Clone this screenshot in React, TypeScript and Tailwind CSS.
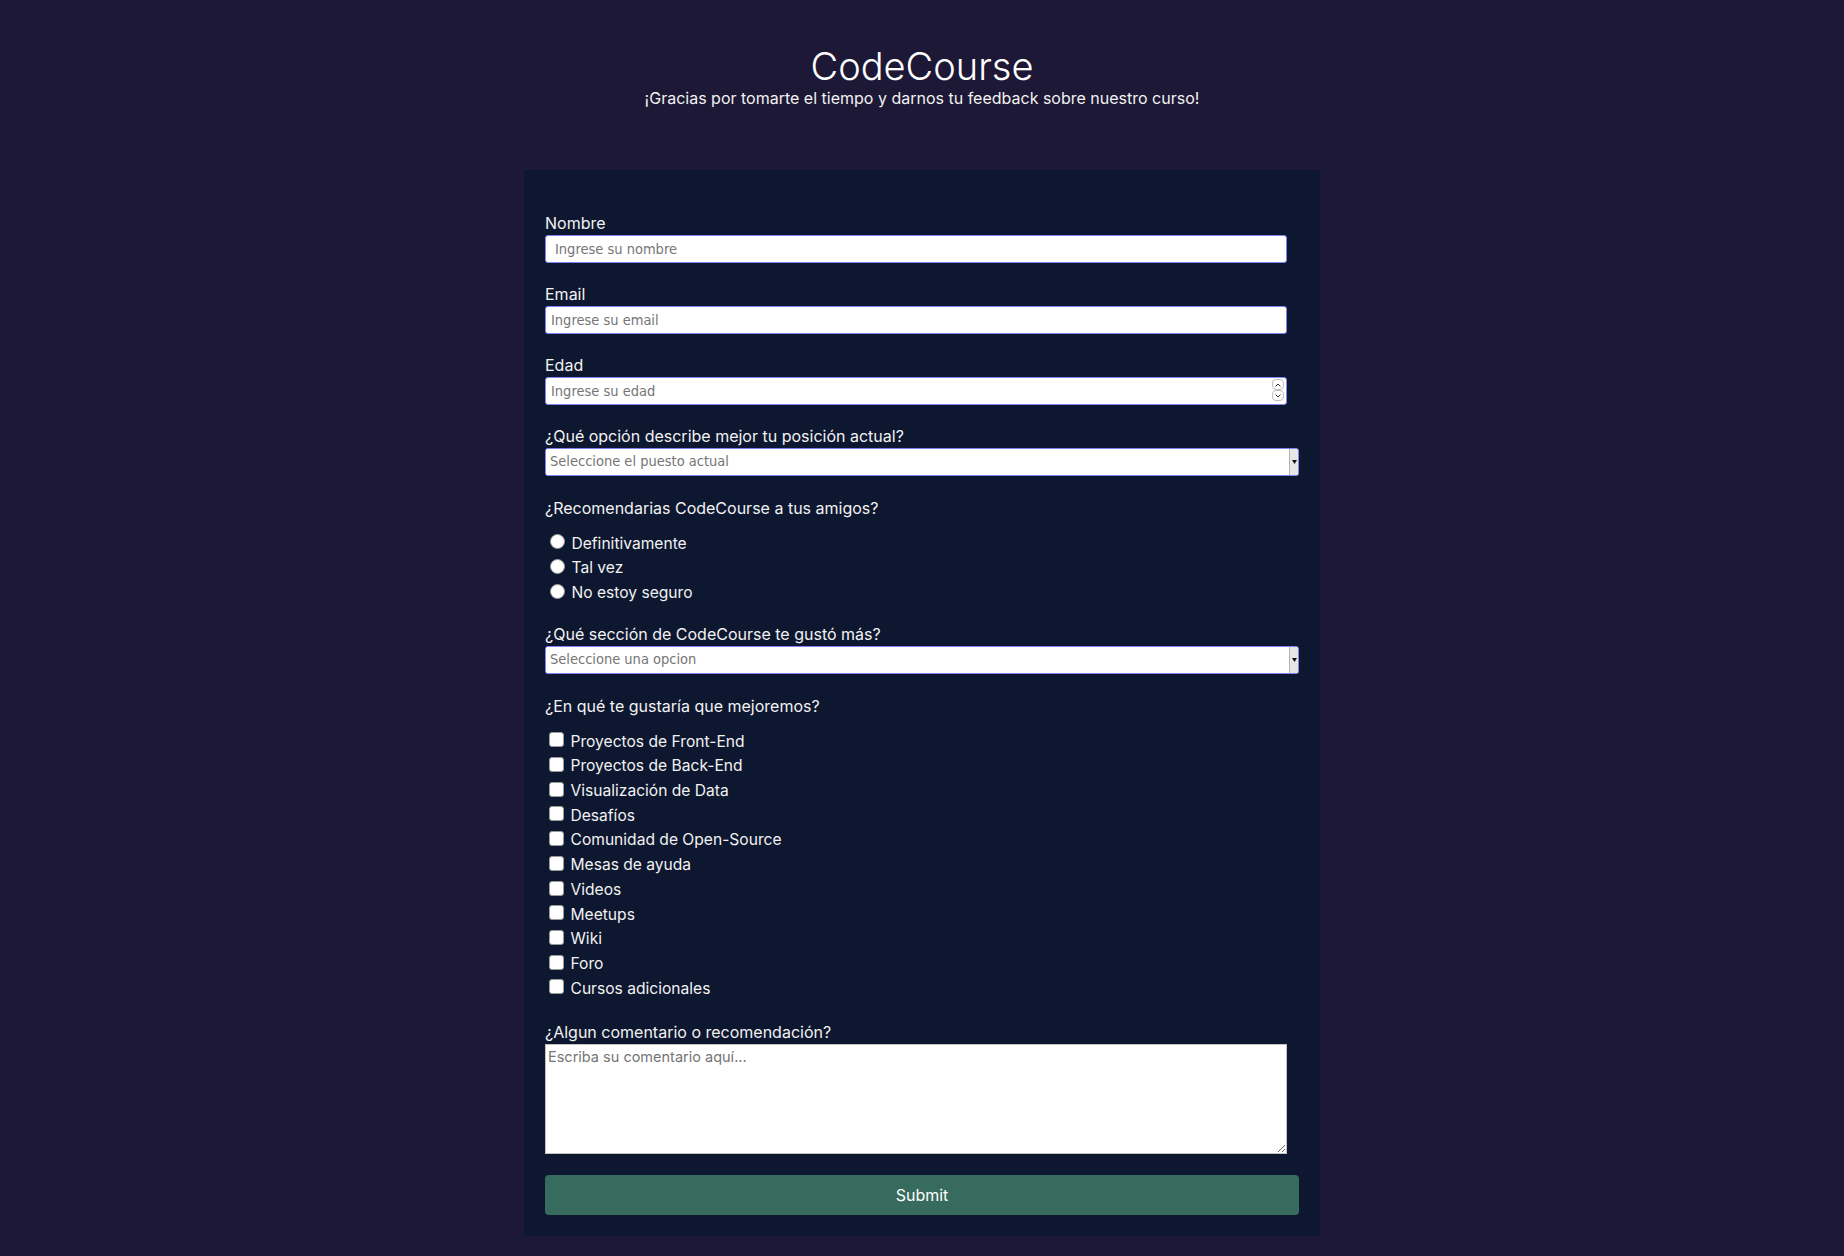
import { useState } from 'react'

const positions = ['Estudiante', 'Trabajo a tiempo completo', 'Trabajo a medio tiempo', 'Buscando empleo', 'Otro']
const sections = ['Desafíos', 'Proyectos', 'Comunidad', 'Open Source']
const recommend = ['Definitivamente', 'Tal vez', 'No estoy seguro']
const improvements = [
  'Proyectos de Front-End',
  'Proyectos de Back-End',
  'Visualización de Data',
  'Desafíos',
  'Comunidad de Open-Source',
  'Mesas de ayuda',
  'Videos',
  'Meetups',
  'Wiki',
  'Foro',
  'Cursos adicionales',
]

const placeholderFont = "font-['Liberation_Sans_Narrow','DejaVu_Sans_Condensed',sans-serif]"

function FakeSelect({ placeholder, options }: { placeholder: string; options: string[] }) {
  const [value, setValue] = useState('')
  return (
    <div className="flex h-[28px] w-[754px] overflow-hidden rounded-[3px] border border-[#8282f2] bg-white">
      <select
        value={value}
        onChange={e => setValue(e.target.value)}
        className={`flex-1 appearance-none bg-white pl-[4px] text-[14.5px] text-[#757575] outline-none ${placeholderFont}`}
      >
        <option value="" disabled>
          {placeholder}
        </option>
        {options.map(o => (
          <option key={o} value={o}>
            {o}
          </option>
        ))}
      </select>
      <span className="flex w-[9px] items-center justify-center border-l border-[#b5b5b5] bg-[#e6e6e6]">
        <svg width="5" height="4" viewBox="0 0 5 4">
          <path d="M0 0h5L2.5 4z" fill="#111" />
        </svg>
      </span>
    </div>
  )
}

function Spinner() {
  return (
    <span className="pointer-events-none absolute right-[3px] top-[2px] flex flex-col">
      <span className="flex h-[11px] w-[12px] items-center justify-center rounded-[4px] border border-[#bdbdbd] bg-white">
        <svg width="6" height="4" viewBox="0 0 6 4">
          <path d="M0.5 3.5L3 1l2.5 2.5" fill="none" stroke="#333" strokeWidth="1" />
        </svg>
      </span>
      <span className="flex h-[11px] w-[12px] items-center justify-center rounded-[4px] border border-[#bdbdbd] bg-white">
        <svg width="6" height="4" viewBox="0 0 6 4">
          <path d="M0.5 0.5L3 3l2.5-2.5" fill="none" stroke="#333" strokeWidth="1" />
        </svg>
      </span>
    </span>
  )
}

export default function App() {
  const [comment, setComment] = useState('')

  return (
    <div className="min-h-screen bg-[#1d1835] pb-5 font-['Inter',sans-serif] text-[#f2f2f2]">
      <header className="pt-[47px] text-center">
        <h1 className="text-[38px] font-light leading-[39px] text-white">CodeCourse</h1>
        <p className="text-[16px] leading-[24px]">¡Gracias por tomarte el tiempo y darnos tu feedback sobre nuestro curso!</p>
      </header>

      <form
        className="mx-auto mt-[60px] w-[796px] bg-[#0e1730] px-[21px] pb-[21px] pt-[41px]"
        onSubmit={e => e.preventDefault()}
      >
        <div className="mb-[19px]">
          <label className="block text-[16px] leading-[24px]" htmlFor="name">Nombre</label>
          <input
            id="name"
            type="text"
            placeholder="Ingrese su nombre"
            className={`h-[28px] w-[742px] rounded-[3px] border border-[#8282f2] bg-white pl-[9px] text-[14.5px] text-black outline-none placeholder:text-[#757575] ${placeholderFont}`}
          />
        </div>

        <div className="mb-[19px]">
          <label className="block text-[16px] leading-[24px]" htmlFor="email">Email</label>
          <input
            id="email"
            type="email"
            placeholder="Ingrese su email"
            className={`h-[28px] w-[742px] rounded-[3px] border border-[#8282f2] bg-white pl-[5px] text-[14.5px] text-black outline-none placeholder:text-[#757575] ${placeholderFont}`}
          />
        </div>

        <div className="mb-[19px]">
          <label className="block text-[16px] leading-[24px]" htmlFor="age">Edad</label>
          <div className="relative w-[742px]">
            <input
              id="age"
              type="number"
              placeholder="Ingrese su edad"
              className={`h-[28px] w-[742px] appearance-none rounded-[3px] border border-[#8282f2] bg-white pl-[5px] text-[14.5px] text-black outline-none placeholder:text-[#757575] [&::-webkit-inner-spin-button]:appearance-none ${placeholderFont}`}
            />
            <Spinner />
          </div>
        </div>

        <div className="mb-[20px]">
          <label className="block text-[16px] leading-[24px]">¿Qué opción describe mejor tu posición actual?</label>
          <FakeSelect placeholder="Seleccione el puesto actual" options={positions} />
        </div>

        <div className="mb-[17px]">
          <p className="text-[16px] leading-[24px]">¿Recomendarias CodeCourse a tus amigos?</p>
          <div className="mt-[11px] flex flex-col">
            {recommend.map(r => (
              <label key={r} className="flex h-[24.7px] items-center text-[15.6px]">
                <input
                  type="radio"
                  name="recommend"
                  className="mb-[3px] ml-[4.5px] mr-[7px] h-[15px] w-[15px] appearance-none rounded-full border border-[#9a9a9a] bg-white checked:border-[4px] checked:border-[#376b5e]"
                />
                {r}
              </label>
            ))}
          </div>
        </div>

        <div className="mb-[20px]">
          <label className="block text-[16px] leading-[24px]">¿Qué sección de CodeCourse te gustó más?</label>
          <FakeSelect placeholder="Seleccione una opcion" options={sections} />
        </div>

        <div className="mb-[19px]">
          <p className="text-[16px] leading-[24px]">¿En qué te gustaría que mejoremos?</p>
          <div className="mt-[11px] flex flex-col">
            {improvements.map(i => (
              <label key={i} className="flex h-[24.7px] items-center text-[15.6px]">
                <input
                  type="checkbox"
                  className="mb-[3px] ml-[3.5px] mr-[7px] h-[15px] w-[15px] appearance-none rounded-[3px] border border-[#9a9a9a] bg-white checked:bg-[#376b5e]"
                />
                {i}
              </label>
            ))}
          </div>
        </div>

        <div className="mb-[21px]">
          <label className="block text-[16px] leading-[24px]" htmlFor="comment">¿Algun comentario o recomendación?</label>
          <textarea
            id="comment"
            value={comment}
            onChange={e => setComment(e.target.value)}
            placeholder="Escriba su comentario aquí..."
            className="block h-[110px] w-[742px] border border-[#c4c4c4] bg-white px-[2px] py-[1px] text-[14.5px] text-black outline-none placeholder:text-[#757575]"
          />
        </div>

        <button
          type="submit"
          className="h-[40px] w-[754px] rounded-[4px] bg-[#376b5e] text-[16px] text-white"
        >
          Submit
        </button>
      </form>
    </div>
  )
}
